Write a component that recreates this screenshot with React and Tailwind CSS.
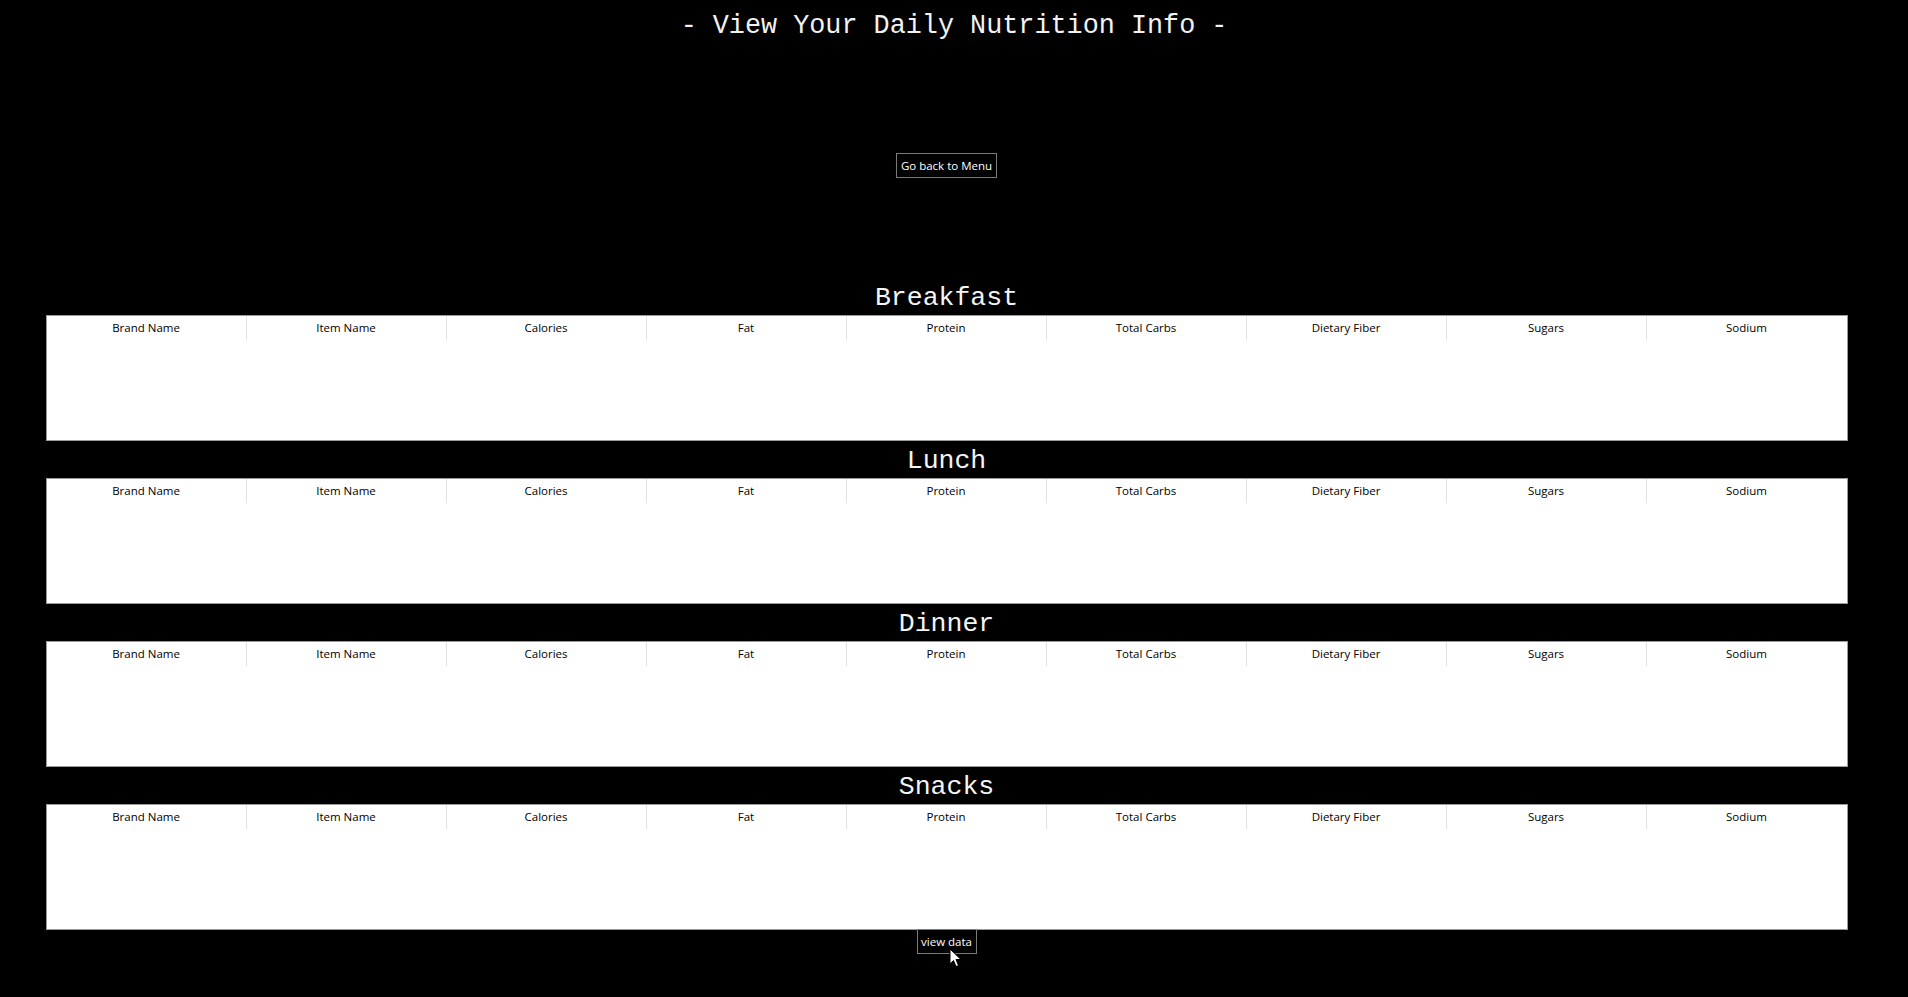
import React from "react";

const cols = ["Brand Name", "Item Name", "Calories", "Fat", "Protein", "Total Carbs", "Dietary Fiber", "Sugars", "Sodium"];
const meals = ["Breakfast", "Lunch", "Dinner", "Snacks"];

const ui = { fontFamily: '"Open Sans", "Noto Sans", sans-serif' };
const mono = { fontFamily: '"Liberation Mono", "Courier New", monospace' };

function Section({ title, first }) {
  return (
    <div className="flex flex-col">
      <div className={(first ? "h-[38px]" : "h-[37px]") + " flex items-center justify-center"}>
        <span className="text-[26.5px] leading-none text-[#f4f4f4] pt-[4px]" style={mono}>
          {title}
        </span>
      </div>
      <div className="h-[126px] bg-white border border-[#9a9a9a]">
        <div className="grid grid-cols-9 h-[24px]">
          {cols.map((c, i) => (
            <div
              key={c}
              className={
                "flex items-center justify-center text-[11.5px] text-black " +
                (i < cols.length - 1 ? "border-r border-[#e2e2e2]" : "")
              }
              style={ui}
            >
              {c}
            </div>
          ))}
        </div>
      </div>
    </div>
  );
}

export default function App() {
  return (
    <div className="relative w-full min-h-[997px] bg-black overflow-hidden">
      <div className="h-[50px] flex items-center justify-center pt-[2px]">
        <h1 className="text-[26.8px] leading-none text-[#f2f2f2] whitespace-pre" style={mono}>
          - View Your Daily Nutrition Info -
        </h1>
      </div>
      <div className="w-[1893px] flex flex-col items-center">
        <button
          className="mt-[103px] h-[25px] w-[101px] border border-[#7a7a7a] bg-black text-white text-[11.5px] flex items-center justify-center"
          style={ui}
        >
          Go back to Menu
        </button>
        <div className="mt-[99px] w-[1802px] flex flex-col">
          {meals.map((m, i) => (
            <Section key={m} title={m} first={i === 0} />
          ))}
        </div>
        <button
          className="h-[25px] w-[60px] -mt-[1px] border border-[#7a7a7a] bg-black text-white text-[11.5px] flex items-center justify-center"
          style={ui}
        >
          view data
        </button>
      </div>
      <svg className="absolute left-[949px] top-[948px]" width="13" height="20" viewBox="0 0 13 20">
        <path d="M1 1 L1 16 L4.5 12.5 L7 18.5 L9.5 17.5 L7 11.5 L12 11.5 Z" fill="white" stroke="black" strokeWidth="1" />
      </svg>
    </div>
  );
}
